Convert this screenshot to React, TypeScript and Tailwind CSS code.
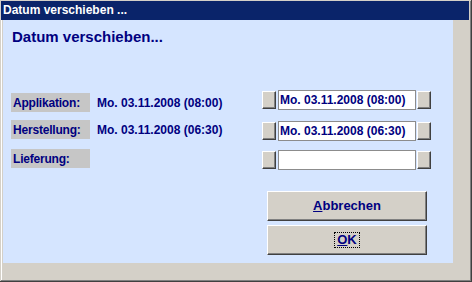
import React from "react";

const bevel =
  "border-t border-l border-white border-r border-b border-r-[#404040] border-b-[#404040] shadow-[inset_-1px_-1px_0_#808080] bg-[#d4d0c8]";

function SpinButton() {
  return <div className={`h-[18px] w-[14px] shrink-0 ${bevel}`} />;
}

function DateField({ value }: { value: string }) {
  return (
    <div className="flex h-[20px] items-center">
      <SpinButton />
      <div className="ml-[2px] flex h-[20px] w-[138px] items-center border border-[#8c8c8c] bg-white pl-px text-[12px] font-bold text-[#000080]">
        {value}
      </div>
      <div className="ml-px">
        <SpinButton />
      </div>
    </div>
  );
}

function Label({ text, value }: { text: string; value?: string }) {
  return (
    <div className="flex h-[19px] items-center">
      <div className="flex h-[19px] w-[79px] items-center bg-[#c6c6c6] pl-[2px] text-[12px] font-bold tracking-[-0.2px] text-[#000080]">
        {text}
      </div>
      {value && (
        <span className="ml-[7px] text-[12px] font-bold text-[#000080]">
          {value}
        </span>
      )}
    </div>
  );
}

export default function App() {
  return (
    <div className="h-[282px] w-[472px] border-r border-b border-[#404040] bg-[#d4d0c8] pt-px pl-px font-['Liberation_Sans',Arial,sans-serif]">
      <div className="flex h-full w-full flex-col border-r border-b border-[#808080]">
        <div className="h-[19px] w-[468px] bg-[#0a246a] pl-[2px] text-[12px] font-bold leading-[19px] text-white">
          Datum verschieben ...
        </div>
        <div className="flex-1 border-l border-white pl-px">
          <div className="flex h-[243px] w-[450px] flex-col bg-[#d5e5ff]">
            <div className="pl-[9px] pt-[8px] text-[15px] font-bold leading-[17px] text-[#000080]">
              Datum verschieben...
            </div>

            <div className="mt-[45px] flex pl-[8px]">
              <div className="flex w-[251px] flex-col pt-[3px]">
                <Label text="Applikation:" value="Mo. 03.11.2008 (08:00)" />
                <div className="mt-[8px]">
                  <Label text="Herstellung:" value="Mo. 03.11.2008 (06:30)" />
                </div>
                <div className="mt-[10px]">
                  <Label text="Lieferung:" />
                </div>
              </div>
              <div className="flex flex-col">
                <DateField value="Mo. 03.11.2008 (08:00)" />
                <div className="mt-[11px]">
                  <DateField value="Mo. 03.11.2008 (06:30)" />
                </div>
                <div className="mt-[9px]">
                  <DateField value="" />
                </div>
              </div>
            </div>

            <div className="mt-[21px] flex flex-col items-end gap-[4px] pr-[26px]">
              <button
                className={`flex h-[30px] w-[160px] items-center justify-center text-[13px] font-bold text-[#000080] ${bevel}`}
              >
                <span>
                  <u>A</u>bbrechen
                </span>
              </button>
              <button
                className={`flex h-[30px] w-[160px] items-center justify-center text-[13px] font-bold text-[#000080] ${bevel}`}
              >
                <span className="border border-dotted border-black px-[2px] leading-[14px]">
                  <u>O</u>K
                </span>
              </button>
            </div>
          </div>
        </div>
      </div>
    </div>
  );
}
